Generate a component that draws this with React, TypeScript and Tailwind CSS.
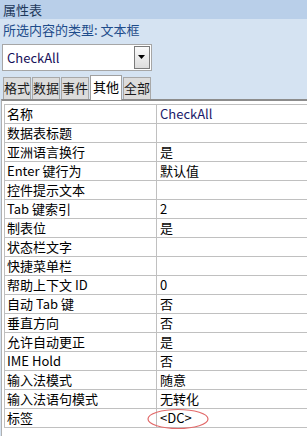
import React from "react";

const rows: [string, string][] = [
  ["名称", "CheckAll"],
  ["数据表标题", ""],
  ["亚洲语言换行", "是"],
  ["Enter 键行为", "默认值"],
  ["控件提示文本", ""],
  ["Tab 键索引", "2"],
  ["制表位", "是"],
  ["状态栏文字", ""],
  ["快捷菜单栏", ""],
  ["帮助上下文 ID", "0"],
  ["自动 Tab 键", "否"],
  ["垂直方向", "否"],
  ["允许自动更正", "是"],
  ["IME Hold", "否"],
  ["输入法模式", "随意"],
  ["输入法语句模式", "无转化"],
  ["标签", "<DC>"],
];

const tabs = ["格式", "数据", "事件", "其他", "全部"];

function App() {
  return (
    <div
      className="w-[307px] h-[436px] bg-[#d5e3f2] overflow-hidden flex flex-col"
      style={{ fontFamily: '"Noto Sans CJK SC", "Liberation Sans", sans-serif' }}
    >
      <div className="h-[19px] shrink-0 bg-[#b9cfe9] pl-[3px] text-[13px] leading-[19px] text-[#1e395b]">
        属性表
      </div>
      <div className="h-[21px] shrink-0 pl-[3px] text-[13px] leading-[21px] text-[#1e4c8a]">
        所选内容的类型: 文本框
      </div>

      {/* combo */}
      <div className="mt-[4px] ml-[2px] w-[150px] h-[27px] shrink-0 border border-[#a6a6a6] bg-white flex items-center">
        <span className="pl-[4px] flex-1 text-[13px] text-[#16105a]">CheckAll</span>
        <div className="mr-[1px] w-[16px] h-[23px] border border-[#7b7b7b] bg-gradient-to-b from-[#fbfbfb] to-[#dcdcdc] flex items-center justify-center">
          <svg width="8" height="5" viewBox="0 0 8 5">
            <path d="M0 0h7L3.5 4z" fill="#000" />
          </svg>
        </div>
      </div>

      {/* tabs */}
      <div className="mt-[4px] ml-[3px] h-[24px] shrink-0 flex items-end gap-[1px]">
        {tabs.map((t) => {
          const sel = t === "其他";
          return (
            <div
              key={t}
              className={
                sel
                  ? "h-[25px] w-[32px] bg-white border border-b-0 border-[#a0a0a0] text-[13px] leading-[22px] text-black text-center -mb-[1px] relative z-10"
                  : "h-[22px] w-[28px] bg-[#dcdcdc] border border-b-0 border-[#a8a8a8] text-[13px] leading-[20px] text-[#1b1b1b] text-center"
              }
            >
              {t}
            </div>
          );
        })}
      </div>

      {/* panel */}
      <div className="flex-1 border-t-2 border-l border-[#8c8c8c] border-l-[#b0b0b0] bg-white ml-[1px] pt-[3px] pl-[2px] relative">
        <div className="border-t border-l border-[#c0c0c0]">
          {rows.map(([k, v]) => (
            <div key={k} className="h-[19px] flex border-b border-[#c0c0c0] text-[13px] leading-[18px] text-black">
              <div className="w-[152px] shrink-0 border-r border-[#c0c0c0] pl-[2px] whitespace-nowrap">{k}</div>
              <div className={"pl-[3px] whitespace-nowrap " + (v === "CheckAll" ? "text-[#1a1a6a]" : "text-black")}>
                {v}
              </div>
            </div>
          ))}
        </div>
        <svg className="absolute left-[144px] top-[307px]" width="64" height="22" viewBox="0 0 64 22">
          <ellipse cx="32" cy="11" rx="30" ry="9.5" fill="none" stroke="#e26a6a" strokeWidth="1.2" />
        </svg>
      </div>
    </div>
  );
}

export default App;
